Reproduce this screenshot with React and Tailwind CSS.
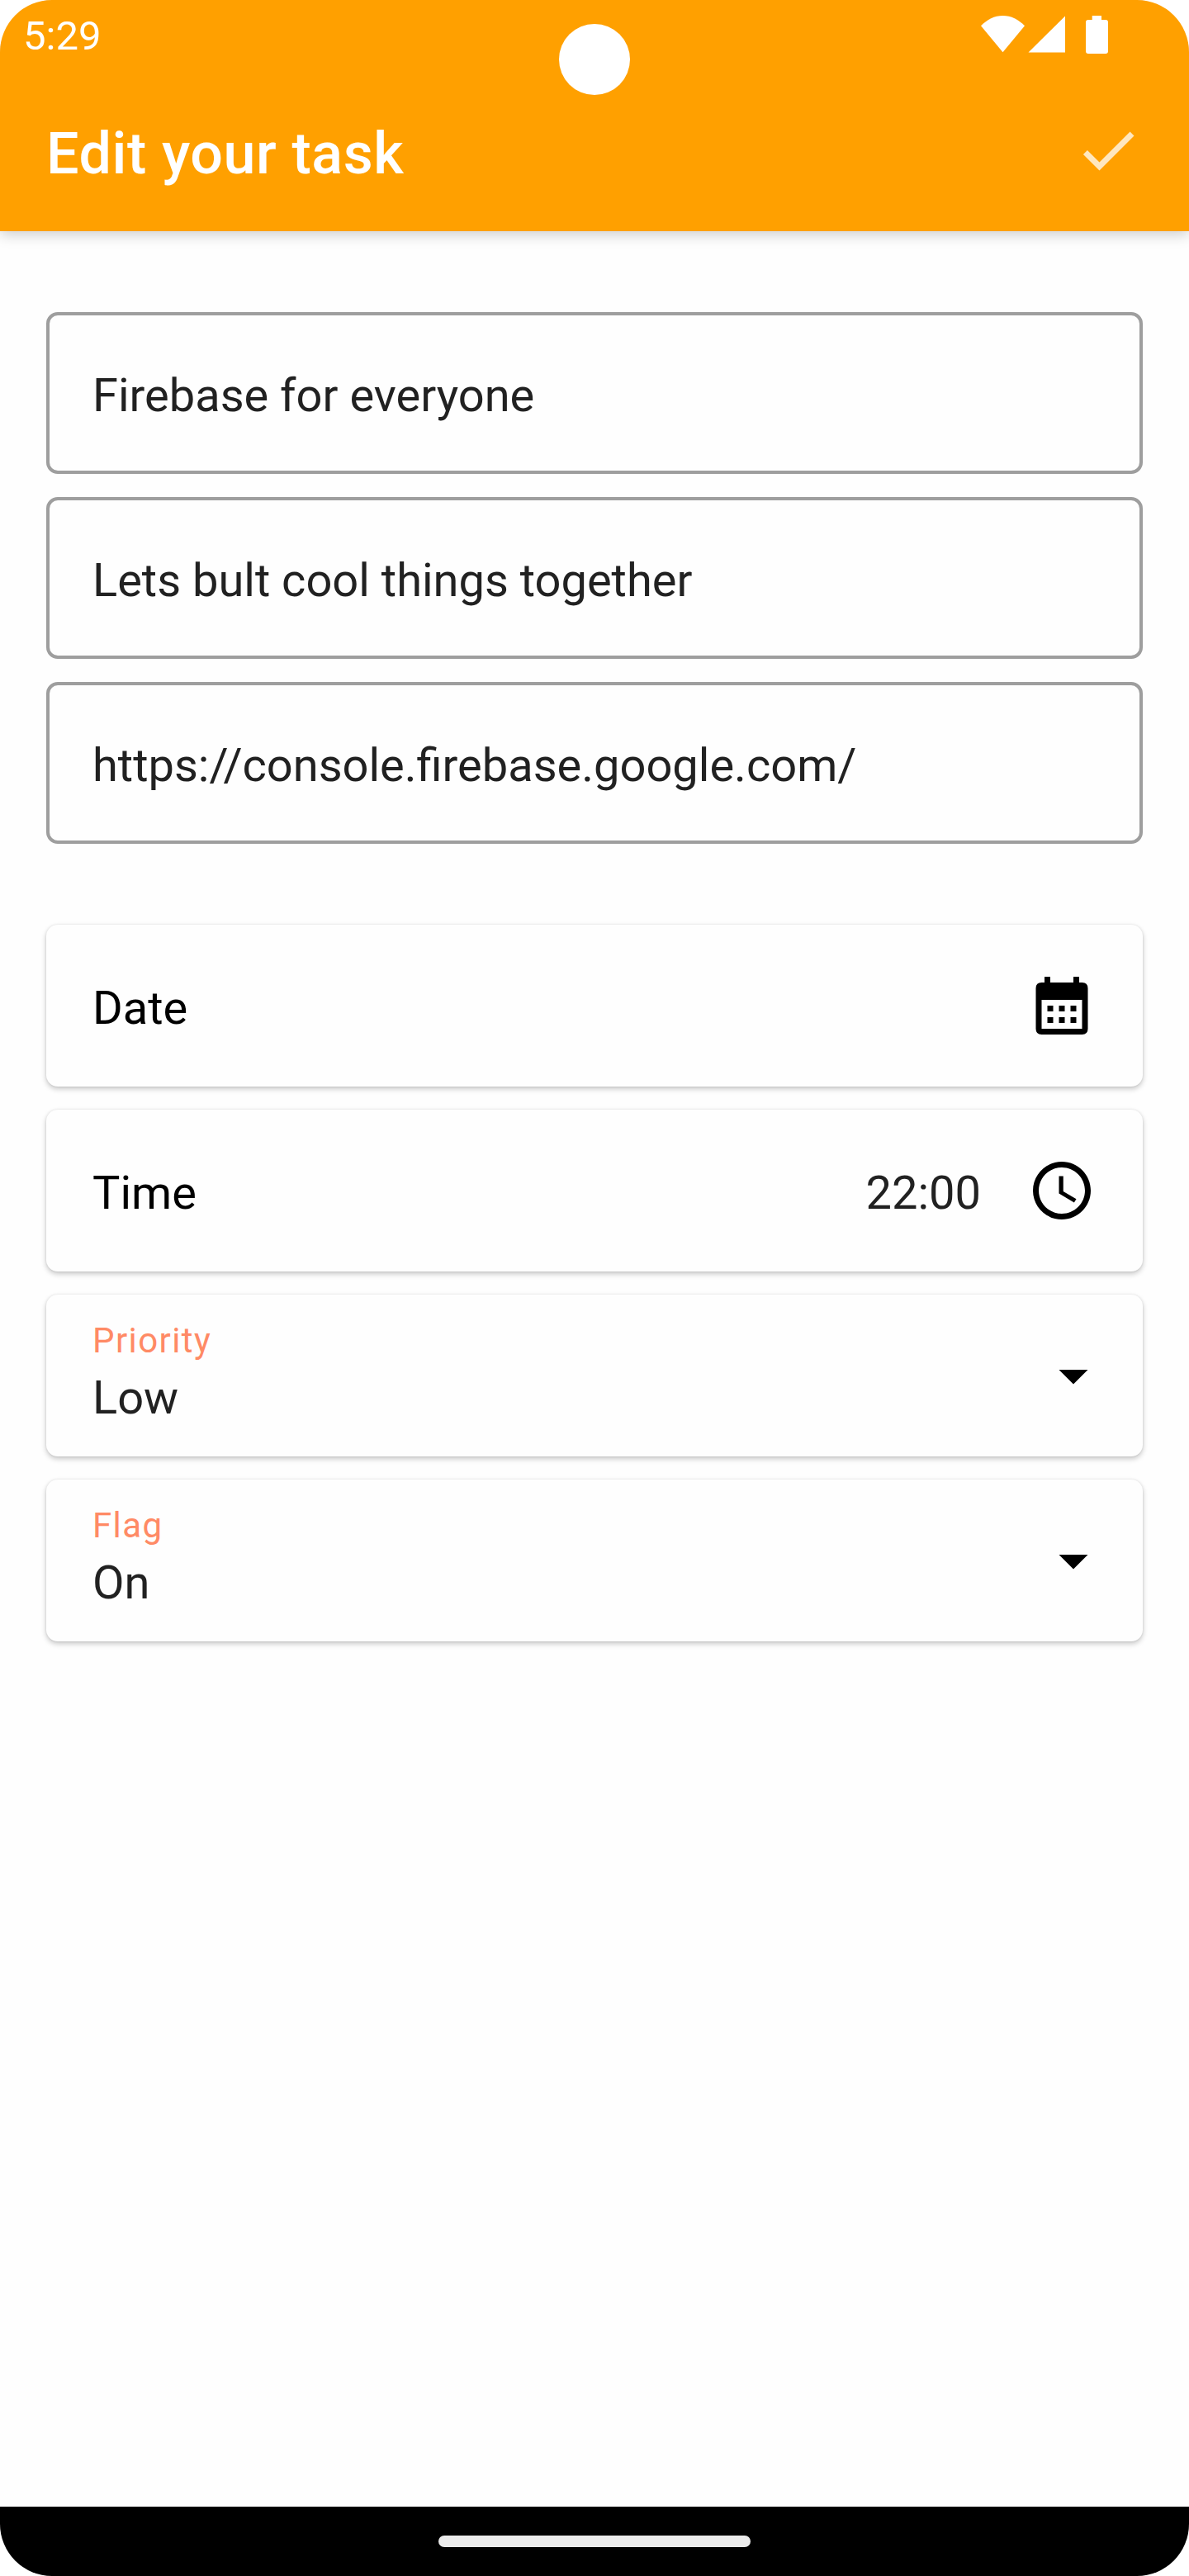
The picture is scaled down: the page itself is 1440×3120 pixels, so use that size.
function StatusBar() {
  return (
    <div className="flex h-[84px] items-start pl-7 pr-[98px]">
      <span className="mt-[15px] text-[49px] leading-[58px] text-white">5:29</span>
      <svg className="ml-auto mt-[19px] h-[46px] w-[154px] fill-white" viewBox="0 0 154 46">
        <path d="M0 12.3C7.5 4.6 16.500 0 26.500 0S45.500 4.600 53 12.300L26.500 44.300Z" />
        <path d="M102 .5V44.500H57.500Z" />
        <path d="M134.700 0h11.300v5h5q3 0 3 3v35q0 3-3 3h-21q-3 0-3-3V8q0-3 3-3h4.700z" />
      </svg>
    </div>
  );
}

function TextField({ value }) {
  return (
    <div className="flex h-[196px] items-center rounded-[14px] border-4 border-[#9e9e9e] pl-[52px] pt-[6px] text-[56px] leading-[66px] text-[#212121]">
      {value}
    </div>
  );
}

const cardClass =
  "flex h-[196px] items-center rounded-[14px] bg-[#fefefe] pl-14 text-[56px] leading-[66px] shadow-[0_3px_6px_rgba(0,0,0,0.22),0_0_3px_rgba(0,0,0,0.09)]";

function PickerCard({ label, value, children }) {
  return (
    <div className={`${cardClass} pr-14`}>
      <span className="pt-[6px] text-black">{label}</span>
      <span className="ml-auto mr-14 pt-[6px] text-[#212121]">{value}</span>
      <svg className="size-[84px]" viewBox="0 0 24 24">
        {children}
      </svg>
    </div>
  );
}

function SelectCard({ label, value }) {
  return (
    <div className={`${cardClass} justify-between pr-[42px]`}>
      <div className="flex flex-col pb-[7px]">
        <span className="text-[42px] leading-[50px] tracking-[1.4px] text-[#ff8a65]">{label}</span>
        <span className="mt-[11px] text-[#212121]">{value}</span>
      </div>
      <svg className="size-[84px]" viewBox="0 0 24 24">
        <path d="M7 10l5 5 5-5z" />
      </svg>
    </div>
  );
}

export default function App() {
  return (
    <div className="h-[3120px] w-[1440px] bg-white font-['Roboto',sans-serif]">
      <div className="relative flex h-full flex-col overflow-hidden rounded-[63px] bg-[#fefefe]">
        <header className="h-[280px] bg-[#ffa000] shadow-[0_4px_16px_rgba(0,0,0,0.2)]">
          <StatusBar />
          <div className="flex h-[196px] items-center justify-between px-14">
            <h1 className="pt-2 text-[70px] font-medium leading-[82px] tracking-[0.6px] text-white">Edit your task</h1>
            <svg className="size-[84px] fill-white/75" viewBox="0 0 24 24">
              <path d="M9 16.170L4.830 12l-1.420 1.410L9 19 21 7l-1.410-1.410z" />
            </svg>
          </div>
        </header>
        <div className="absolute left-[677px] top-[29px] size-[86px] rounded-full bg-white" />

        <main className="flex-1 px-14 pt-[98px]">
          <div className="flex flex-col gap-7">
            <TextField value="Firebase for everyone" />
            <TextField value="Lets bult cool things together" />
            <TextField value="https://console.firebase.google.com/" />
          </div>
          <div className="mt-[98px] flex flex-col gap-7">
            <PickerCard label="Date" value="">
              <path
                fillRule="evenodd"
                d="M6 2h2v2h8V2h2v2h1q2 0 2 2v14q0 2-2 2H5q-2 0-2-2V6q0-2 2-2h1zM5 10v10h14V10z"
              />
              <path d="M7 12h2v2H7zm4 0h2v2h-2zm4 0h2v2h-2zm-8 4h2v2H7zm4 0h2v2h-2zm4 0h2v2h-2z" />
            </PickerCard>
            <PickerCard label="Time" value="22:00">
              <path d="M11.990 2C6.470 2 2 6.480 2 12s4.470 10 9.990 10C17.520 22 22 17.520 22 12S17.520 2 11.990 2zM12 20c-4.420 0-8-3.580-8-8s3.580-8 8-8 8 3.580 8 8-3.580 8-8 8z" />
              <path d="M12.500 7H11v6l5.250 3.150.750-1.230-4.500-2.670z" />
            </PickerCard>
            <SelectCard label="Priority" value="Low" />
            <SelectCard label="Flag" value="On" />
          </div>
        </main>

        <footer className="flex h-[84px] items-center justify-center bg-black">
          <div className="h-[14px] w-[378px] rounded-full bg-[#ebebeb]" />
        </footer>
      </div>
    </div>
  );
}
